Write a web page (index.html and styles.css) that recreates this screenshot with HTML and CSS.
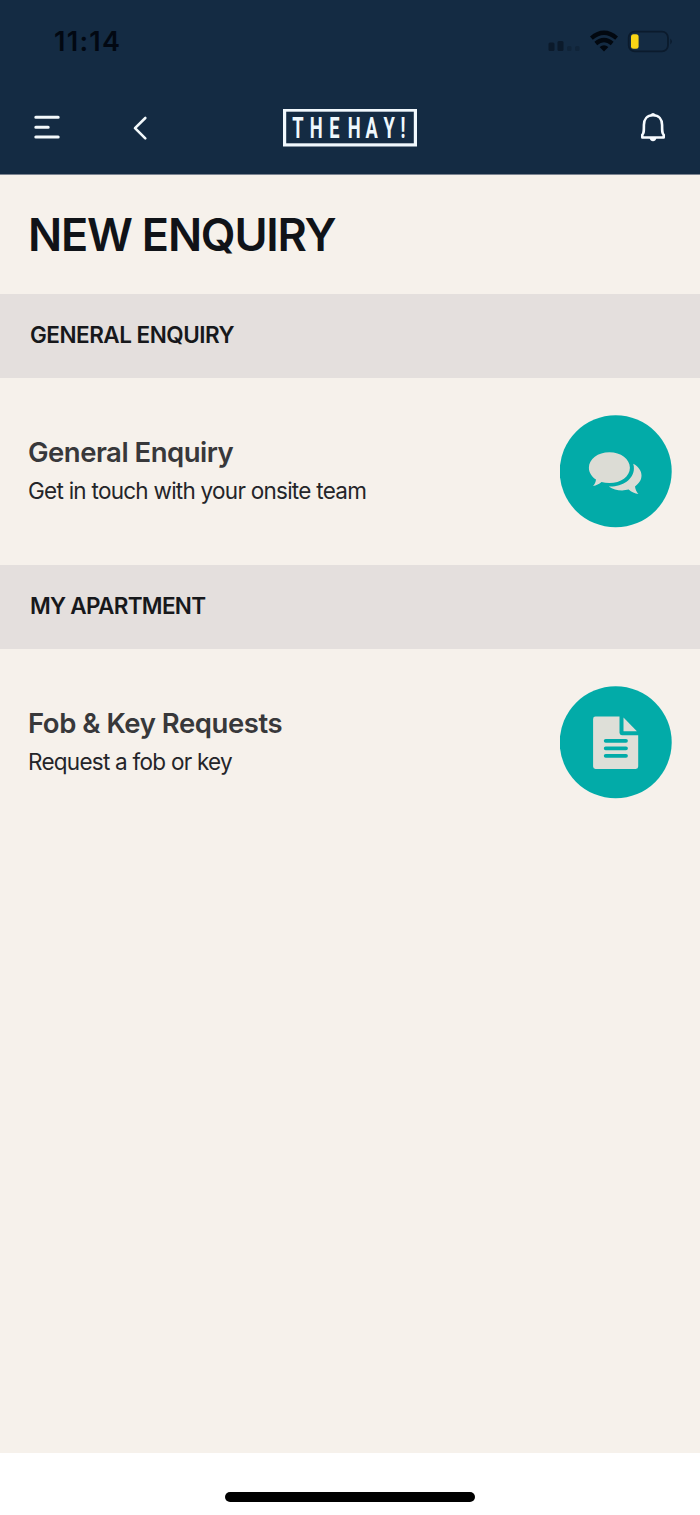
FILE: index.html
```html
<!DOCTYPE html>
<html lang="en">
<head>
<meta charset="utf-8">
<title>New Enquiry</title>
<link rel="stylesheet" href="styles.css">
</head>
<body>
<div class="screen">
  <header class="header">
    <div class="status">
      <span class="time">11:14</span>
      <svg class="status-icons" width="126" height="26" viewBox="547 29 126 26">
        <g fill="#0b1a2b"><rect x="548.5" y="42.5" width="6" height="8.5" rx="1.5"/><rect x="557.5" y="41" width="6" height="10" rx="1.5"/></g>
        <g fill="#102439"><rect x="567" y="46" width="4.5" height="5" rx="1.5"/><rect x="575" y="46" width="4.5" height="5" rx="1.5"/></g>
        <g fill="none" stroke="#020810" stroke-width="4.300"><path d="M591.4 38.2Q604 27.5 616.600 38.200"/><path d="M595.800 43.500Q604 36.500 612.200 43.500"/></g>
        <path d="M599.600 47Q604 43.300 608.400 47L604 51.500Z" fill="#020810"/>
        <rect x="628.700" y="31.700" width="39.300" height="19.600" rx="6" fill="none" stroke="#0b1b2d" stroke-width="1.800"/>
        <path d="M670.300 38.500Q673.500 41.500 670.300 44.500Z" fill="#0b1b2d"/>
        <rect x="631" y="34.200" width="7.600" height="14.600" rx="2.500" fill="#f9d515"/>
      </svg>
    </div>
    <nav class="nav">
      <div class="nav-left">
        <svg width="26" height="26" viewBox="34 114.500 26 26" fill="none" stroke="#f3f9fc" stroke-width="3" stroke-linecap="round"><path d="M35.800 116.800H58.200M35.800 126.700H48.200M35.800 136.500H58.200"/></svg>
        <svg width="16" height="26" viewBox="132 115 16 26" fill="none" stroke="#f3f9fc" stroke-width="2.600" stroke-linecap="round" stroke-linejoin="round"><path d="M145.300 118L135 128.200L145.300 138.400"/></svg>
      </div>
      <svg class="logo" width="134" height="38" viewBox="283 109 134 38">
        <rect x="284.600" y="110.100" width="130.800" height="34.800" fill="none" stroke="#f1f8fd" stroke-width="3.200"/>
        <g class="logo-text" transform="translate(0 138) scale(.62 1)"><text x="480.600 510 539.500 571.500 599.500 627.500 650">THEHAY!</text></g>
      </svg>
      <svg width="26" height="32" viewBox="640 111.500 26 32" fill="none" stroke="#f7fbff" stroke-width="2.600" stroke-linejoin="round"><path d="M653 114.800C647 114.800 643.900 119 643.900 124.500C643.900 130.500 644 133 642.300 134.200V137H663.700V134.200C662 133 662.100 130.500 662.100 124.500C662.100 119 659 114.800 653 114.800Z"/><path d="M650 114.800Q653 110 656 114.800ZM649.500 137.500H656.500Q655.500 140.800 653 140.800Q650.500 140.800 649.500 137.500Z" fill="#f7fbff" stroke="none"/></svg>
    </nav>
  </header>
  <main class="main">
    <h1 class="title">NEW ENQUIRY</h1>
    <h2 class="section general">GENERAL ENQUIRY</h2>
    <div class="row">
      <div class="copy"><h3 class="name name-general">General Enquiry</h3><p class="desc desc-general">Get in touch with your onsite team</p></div>
      <svg class="icon" width="113" height="113" viewBox="0.300 -0.300 113 113">
        <circle cx="56" cy="56" r="56" fill="#02aba8"/>
        <path fill="#dcdcd5" d="M49.700 36.900C61.200 36.900 70.200 43.700 70.200 52.400C70.200 61.200 61.200 67.800 49.700 67.800C46.800 67.800 44.200 67.500 41.800 66.800C39.500 68.800 36.600 70.300 33.300 70.800C34.800 69.100 36 67 36.300 64.200C31.900 61.500 29.200 57 29.200 52.400C29.200 43.700 38.200 36.900 49.700 36.900Z"/>
        <path fill="#dcdcd5" d="M73.500 48.500C78.800 51.300 81.800 55.500 81.800 60.300C81.800 64.700 79.300 68.400 75.300 71.100C75.700 74.100 77 76.600 78.700 78.600C75.400 78.400 71.500 76.700 69 74.300C61.500 76.100 54.600 74.800 49 71.200C61.500 72 74 64.800 74.200 53.500C74.300 51.700 74.100 50.100 73.500 48.500Z"/>
      </svg>
    </div>
    <h2 class="section apartment">MY APARTMENT</h2>
    <div class="row">
      <div class="copy"><h3 class="name name-fob">Fob &amp; Key Requests</h3><p class="desc desc-fob">Request a fob or key</p></div>
      <svg class="icon" width="113" height="113" viewBox="0.300 -0.300 113 113">
        <circle cx="56" cy="56" r="56" fill="#02aba8"/>
        <path fill="#dedfd8" d="M35.800 30.200H59.800V46.500Q59.800 48.900 62.200 48.900H78.500V80.300Q78.500 82.700 76.100 82.700H35.800Q33.400 82.700 33.400 80.300V32.600Q33.400 30.200 35.800 30.200Z"/>
        <path fill="#dedfd8" d="M63.800 31.200L77.200 44.900H63.800Z"/>
        <path d="M46 54.500H66.300M46 62H66.300M46 69.500H66.300" stroke="#02aba8" stroke-width="3.800" stroke-linecap="round"/>
      </svg>
    </div>
  </main>
  <footer class="footer"><div class="home-bar"></div></footer>
</div>
</body>
</html>
```
FILE: styles.css
```css
* { box-sizing: border-box; margin: 0; padding: 0; }
body { font-family: Inter, "Liberation Sans", sans-serif; background: #fff; }
svg { display: block; }
.screen { width: 700px; height: 1515px; display: flex; flex-direction: column; overflow: hidden; }
.header { height: 175px; background: #142b43; border-bottom: 1px solid #7c8491; }
.status { height: 84px; padding: 0 27px 0 54px; display: flex; align-items: center; justify-content: space-between; }
.time { font-size: 27px; font-weight: 600; line-height: 32px; color: #020812; letter-spacing: 1.3px; }
.nav { height: 87px; padding: 0 34px; display: grid; grid-template-columns: 249px 134px 1fr; align-items: center; }
.nav > :last-child { justify-self: end; }
.nav-left { display: flex; gap: 72px; align-items: center; }
.logo-text { font: 700 29.500px Roboto, "Liberation Sans", sans-serif; fill: #eff8fd; text-anchor: middle; }
.main { flex: 1; background: #f6f1eb; }
.title { height: 119px; padding: 31px 28px 0; font-size: 45px; line-height: 58px; font-weight: 600; letter-spacing: -1.2px; color: #101318; }
.section { height: 84px; padding: 26px 30px 0; font-size: 22.500px; line-height: 30px; font-weight: 600; letter-spacing: -0.5px; color: #17181b; background: #e4dfdd; }
.apartment { letter-spacing: -0.7px; }
.row { height: 187px; padding: 0 27px 0 28px; display: flex; align-items: center; justify-content: space-between; }
.name { font-size: 27.500px; line-height: 36px; font-weight: 600; letter-spacing: -0.5px; color: #38383a; }
.name-fob { letter-spacing: -0.45px; }
.desc { margin-top: 4px; padding-bottom: 1px; font-size: 22.500px; line-height: 34px; font-weight: 400; letter-spacing: -0.74px; color: #242529; }
.footer { height: 62px; background: #fff; padding-top: 39px; display: flex; justify-content: center; }
.home-bar { width: 250px; height: 10px; border-radius: 5px; background: #000; }
```
